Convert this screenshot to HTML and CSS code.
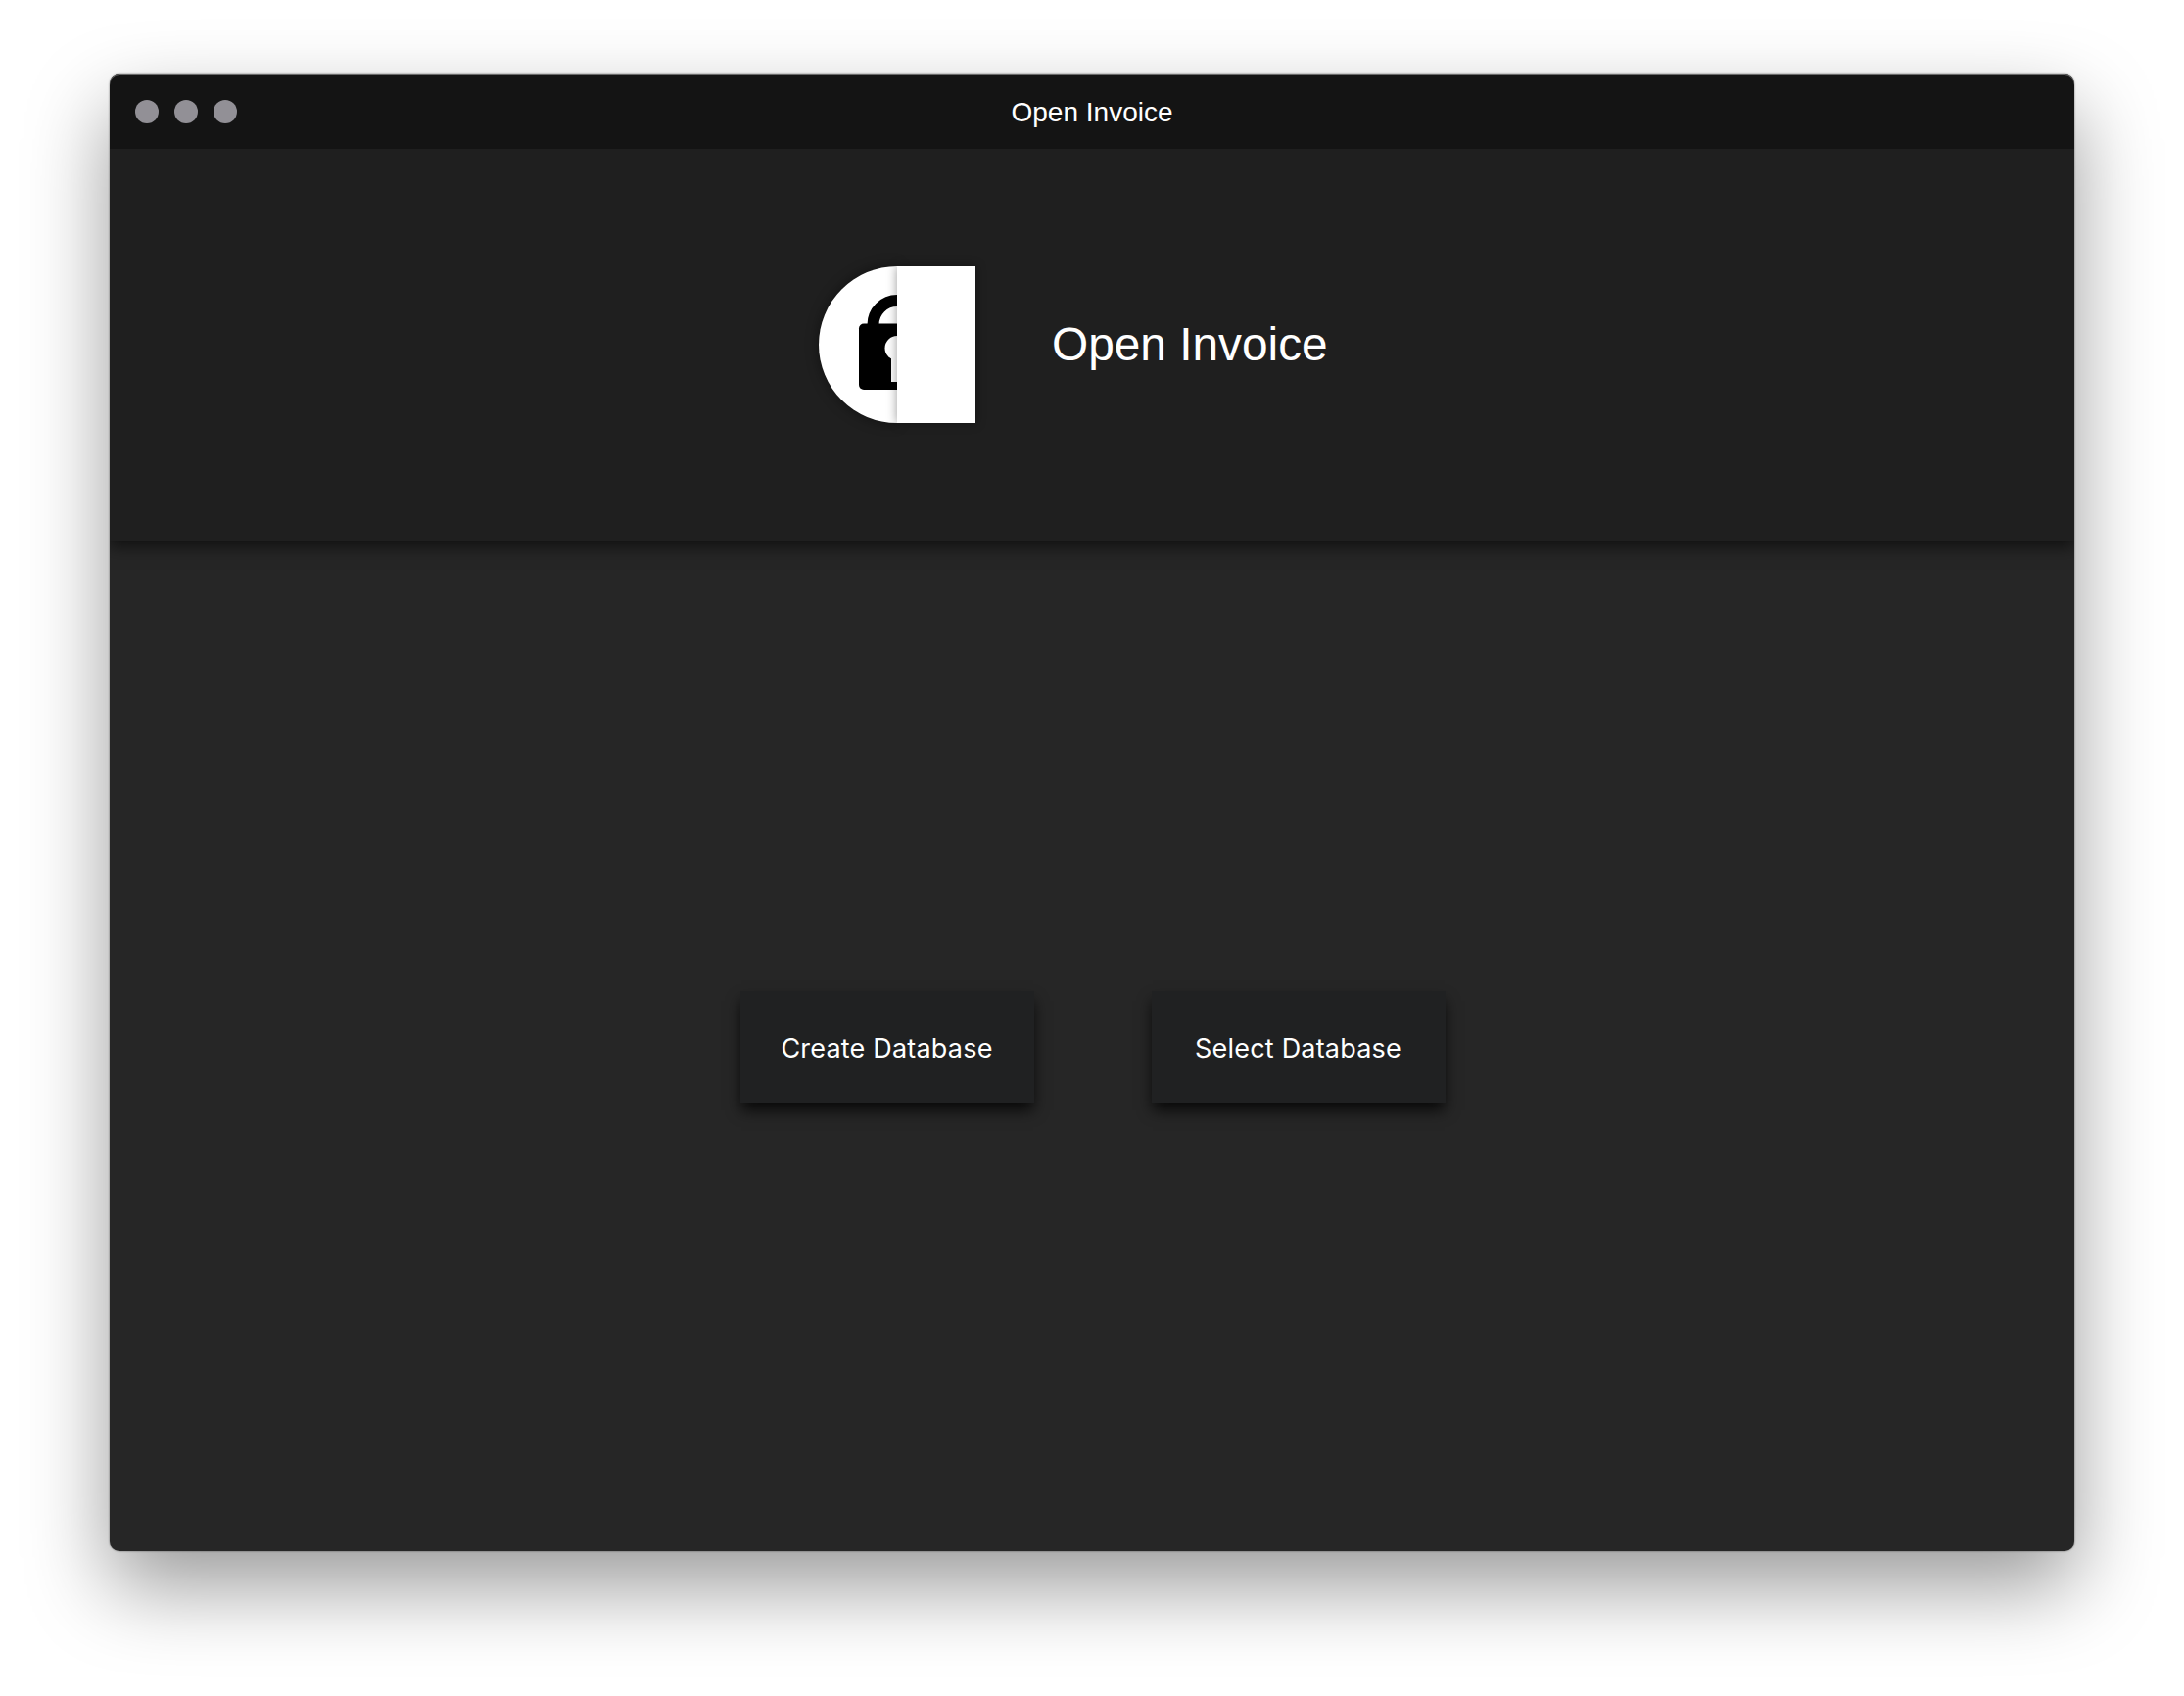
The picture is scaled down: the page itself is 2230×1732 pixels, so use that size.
FILE: index.html
```html
<!DOCTYPE html>
<html lang="en">
<head>
<meta charset="utf-8">
<title>Open Invoice</title>
<link rel="stylesheet" href="styles.css">
</head>
<body>
<main class="window">
  <header class="titlebar">
    <div class="controls"><span class="control"></span><span class="control"></span><span class="control"></span></div>
    <span class="window-title">Open Invoice</span>
  </header>
  <section class="banner">
    <div class="logo">
      <div class="logo-left">
        <svg class="lock" width="80" height="160" viewBox="0 0 80 160">
          <path d="M55.5 60V59.500A24.5 24.5 0 0 1 80 35" fill="none" stroke="#000" stroke-width="12"/>
          <rect x="41" y="58.5" width="78" height="67.5" rx="5"/>
          <circle cx="80" cy="83.5" r="12.5" fill="#fff"/>
          <rect x="74" y="90" width="12" height="28" fill="#fff"/>
        </svg>
      </div>
      <div class="logo-right"></div>
    </div>
    <h1 class="brand">Open Invoice</h1>
  </section>
  <section class="actions">
    <button class="action">Create Database</button>
    <button class="action">Select Database</button>
  </section>
</main>
</body>
</html>
```
FILE: styles.css
```css
* { box-sizing: border-box; }
body {
  margin: 0;
  padding: 76px 112px 148px;
  height: 1732px;
  background: #fff;
  color: #fff;
  font-family: "Liberation Sans", Arial, sans-serif;
  overflow: hidden;
}
.window {
  display: flex;
  flex-direction: column;
  height: 1508px;
  border-radius: 10px;
  background: #262626;
  box-shadow: 0 0 2px rgba(0, 0, 0, .6), 0 36px 84px rgba(0, 0, 0, .4);
}
.titlebar {
  display: grid;
  grid-template-columns: 1fr auto 1fr;
  align-items: center;
  height: 76px;
  padding: 0 26px;
  border-radius: 10px 10px 0 0;
  background: #141414;
  box-shadow: inset 0 1px 0 #6a6a6a;
}
.controls { display: flex; gap: 16px; }
.control { width: 24px; height: 24px; border-radius: 50%; background: #929096; }
.window-title { padding-top: 2px; font-size: 28px; line-height: 32px; }
.banner {
  display: flex;
  align-items: center;
  gap: 78px;
  height: 400px;
  padding-left: 724px;
  background: #1f1f1f;
  box-shadow: 0 6px 16px rgba(0, 0, 0, .6);
  clip-path: inset(0 0 -30px 0);
}
.logo { display: flex; }
.logo-left, .logo-right {
  width: 80px;
  height: 160px;
  background: #fff;
}
.logo-left { border-radius: 80px 0 0 80px; box-shadow: 0 0 14px rgba(0, 0, 0, .45); }
.logo-right { box-shadow: 0 0 10px rgba(0, 0, 0, .4); }
.lock { display: block; }
.brand { margin: 0; font-size: 47.8px; font-weight: 400; line-height: 56px; }
.actions {
  flex: 1;
  display: flex;
  align-items: center;
  justify-content: center;
  gap: 120px;
  padding: 2px 0 0 2px;
}
.action {
  width: 300px;
  height: 114px;
  padding: 4px 1px 0 0;
  border: 0;
  background: #202122;
  color: #fff;
  font: 400 27px/34px Inter, sans-serif;
  letter-spacing: .2px;
  box-shadow: 0 9px 14px -1px rgba(0, 0, 0, .75);
}
```
